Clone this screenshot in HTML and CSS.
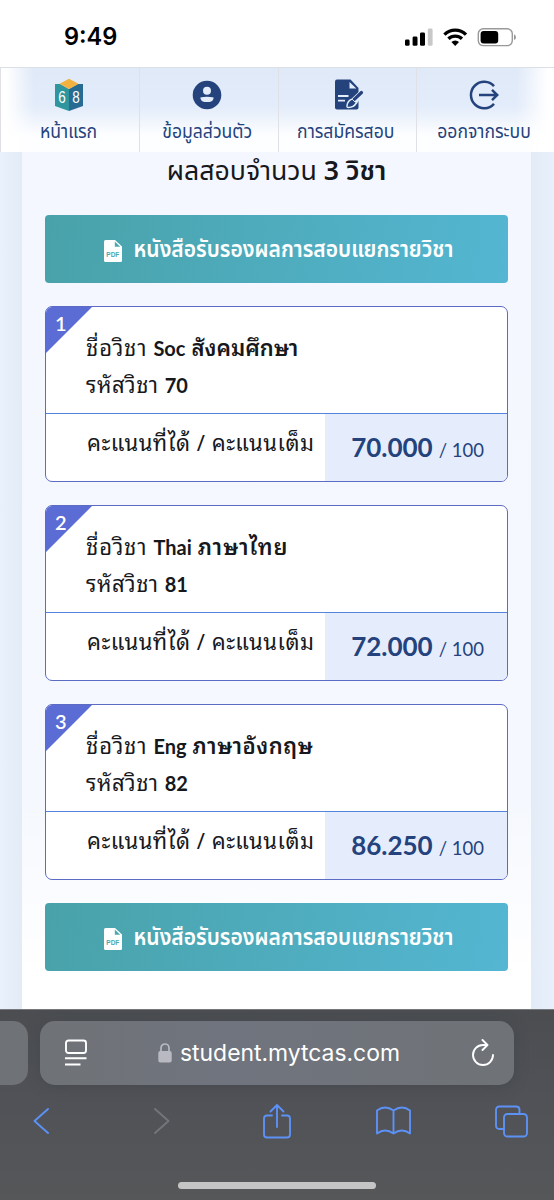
FILE: index.html
```html
<!DOCTYPE html>
<html lang="th">
<head>
<meta charset="utf-8">
<title>myTCAS</title>
<link rel="stylesheet" href="styles.css">
</head>
<body>
<header class="status">
  <span class="clock">9:49</span>
  <svg class="status-icons" width="114" height="20" viewBox="0 0 114 20">
    <rect x="1" y="11.5" width="4.6" height="6.3" rx="1.4"/>
    <rect x="8.6" y="8.5" width="4.9" height="9.3" rx="1.4"/>
    <rect x="16" y="4.5" width="5" height="13.3" rx="1.4"/>
    <rect x="23.8" y="0.5" width="4.8" height="17.3" rx="1.4" fill="#c8c8c8"/>
    <g fill="none" stroke="#000" stroke-width="3.3">
      <path d="M40.4 6.6a15.5 15.5 0 0 1 21.6 0"/>
      <path d="M44.4 10.8a9.8 9.8 0 0 1 13.6 0"/>
    </g>
    <path d="M47.4 14a5.5 5.5 0 0 1 7.600 0l-3.800 3.900z"/>
    <rect x="74.3" y="0.8" width="34" height="16.800" rx="5" fill="#fff" stroke="#999" stroke-width="1.400"/>
    <rect x="76.600" y="3" width="17.600" height="12.400" rx="3"/>
    <path d="M110 6.300q2 1 2 2.900t-2 2.900z" fill="#999"/>
  </svg>
</header>

<nav class="nav">
  <a class="nav-item">
    <svg width="28" height="34" viewBox="0 0 28 34">
      <path d="M0 6h5l9 5v22L0 28z" fill="#2e969c"/>
      <path d="M28 6h-5l-9 5v22l14-5z" fill="#286b92"/>
      <path d="M4.500 5.800 14 .8l9.500 5L14 11z" fill="#f2b23f"/>
      <text class="logo-digit" x="3.200" y="24.800" textLength="7.500" lengthAdjust="spacingAndGlyphs">6</text><text class="logo-digit" x="17.300" y="24.800" textLength="7.500" lengthAdjust="spacingAndGlyphs">8</text>
    </svg>
    <span class="nav-label">หน้าแรก</span>
  </a>
  <a class="nav-item">
    <svg width="30" height="34" viewBox="0 0 30 34">
      <circle cx="15" cy="17" r="14.300" fill="#24427c"/>
      <circle cx="15" cy="12.800" r="4" fill="#e3ecfa"/>
      <path d="M8.300 19.500Q15 18.200 21.700 19.500 21.200 23.500 17.500 24.100h-5Q8.800 23.500 8.300 19.500z" fill="#e3ecfa"/>
    </svg>
    <span class="nav-label">ข้อมูลส่วนตัว</span>
  </a>
  <a class="nav-item">
    <svg class="doc" width="30" height="34" viewBox="0 0 30 34">
      <path d="M3 1.500h13.500L24.500 10v19.500q0 2-2 2H3q-2 0-2-2v-26q0-2 2-2z" fill="#24427c"/>
      <path d="M15.500 4v6.500h6.800z" fill="#e3ecfa"/>
      <path d="M4 18h10.500M4 22.700h7" stroke="#e3ecfa" stroke-width="1.800"/>
      <path d="M27.500 14.500 19 22.500q-4 1-4.500 5.500 4.500 0 6.500-3.500z" fill="#24427c" stroke="#e3ecfa" stroke-width="4.500" stroke-linejoin="round"/>
      <path d="M27.500 14.500 20 21.700" stroke="#24427c" stroke-width="3.200" stroke-linecap="round"/>
      <path d="M18.500 22.500q-3.600 1.500-4 5.500 4.300-.3 6-3.500z" fill="#24427c" stroke="#24427c" stroke-width="1.600"/>
      <path d="m18.200 21.200 3 3" stroke="#e3ecfa" stroke-width="1"/>
    </svg>
    <span class="nav-label">การสมัครสอบ</span>
  </a>
  <a class="nav-item">
    <svg class="logout" width="30" height="34" viewBox="0 0 30 34" fill="none" stroke="#24427c" stroke-width="2.500">
      <path d="M25 8.200a13.200 13.200 0 1 0 0 17.600"/>
      <path d="M10 17h18M23 11.800l5.200 5.200-5.200 5.200"/>
    </svg>
    <span class="nav-label">ออกจากระบบ</span>
  </a>
</nav>

<main class="page">
  <section class="panel">
    <h1 class="title">ผลสอบจำนวน <b>3 วิชา</b></h1>
    <a class="pdf-button">
      <svg width="18" height="22" viewBox="0 0 18 22"><path d="M1.500 0H11l7 6.500V20.500Q18 22 16.500 22h-15Q0 22 0 20.500v-19Q0 0 1.500 0z" fill="#fff"/><path d="M10.800 1.500v5.300h5.400z" fill="#4ba8b0"/><text class="pdf-text" x="2.300" y="16.500" textLength="13" lengthAdjust="spacingAndGlyphs">PDF</text></svg>
      <span class="pdf-label">หนังสือรับรองผลการสอบแยกรายวิชา</span>
    </a>

    <article class="card">
      <span class="corner"></span><span class="num">1</span>
      <div class="card-head"><p><span class="th name">ชื่อวิชา</span><b>Soc</b><b class="th soc">สังคมศึกษา</b></p><p><span class="th code">รหัสวิชา</span><b>70</b></p></div>
      <div class="card-foot"><span class="foot-label th">คะแนนที่ได้ / คะแนนเต็ม</span><span class="score"><b>70.000</b><small>/ 100</small></span></div>
    </article>
    <article class="card">
      <span class="corner"></span><span class="num">2</span>
      <div class="card-head"><p><span class="th name">ชื่อวิชา</span><b>Thai</b><b class="th thai">ภาษาไทย</b></p><p><span class="th code">รหัสวิชา</span><b>81</b></p></div>
      <div class="card-foot"><span class="foot-label th">คะแนนที่ได้ / คะแนนเต็ม</span><span class="score"><b>72.000</b><small>/ 100</small></span></div>
    </article>
    <article class="card">
      <span class="corner"></span><span class="num">3</span>
      <div class="card-head"><p><span class="th name">ชื่อวิชา</span><b>Eng</b><b class="th eng">ภาษาอังกฤษ</b></p><p><span class="th code">รหัสวิชา</span><b>82</b></p></div>
      <div class="card-foot"><span class="foot-label th">คะแนนที่ได้ / คะแนนเต็ม</span><span class="score"><b>86.250</b><small>/ 100</small></span></div>
    </article>

    <a class="pdf-button">
      <svg width="18" height="22" viewBox="0 0 18 22"><path d="M1.500 0H11l7 6.500V20.500Q18 22 16.500 22h-15Q0 22 0 20.500v-19Q0 0 1.500 0z" fill="#fff"/><path d="M10.800 1.500v5.300h5.400z" fill="#4ba8b0"/><text class="pdf-text" x="2.300" y="16.500" textLength="13" lengthAdjust="spacingAndGlyphs">PDF</text></svg>
      <span class="pdf-label">หนังสือรับรองผลการสอบแยกรายวิชา</span>
    </a>
  </section>
</main>

<footer class="browser">
  <div class="tabs">
    <div class="tab-prev"></div>
    <div class="address">
      <svg width="22" height="28" viewBox="0 0 22 28" fill="none" stroke="#fff" stroke-width="1.900"><rect x="1" y="1.500" width="20" height="12.500" rx="2.500"/><path d="M0 19.300h21.500M0 25.500h15.500"/></svg>
      <div class="host">
        <svg width="14" height="20" viewBox="0 0 14 20"><rect x="0.300" y="8" width="13.400" height="11.500" rx="2" fill="#b9bac1"/><path d="M3 9V5a4 4 0 0 1 8 0v4" fill="none" stroke="#b9bac1" stroke-width="1.700"/></svg>
        <span class="url">student.mytcas.com</span>
      </div>
      <svg width="24" height="28" viewBox="0 0 24 28" fill="none" stroke="#fff" stroke-width="1.900" stroke-linecap="round" stroke-linejoin="round"><path d="M22 16A10 10 0 1 1 12 6h4M11.500 1l5 5-5 5"/></svg>
    </div>
  </div>
  <div class="tools">
    <svg width="16" height="28" viewBox="0 0 16 28" class="stroke"><path d="M15 2 1.500 14 15 26"/></svg>
    <svg width="16" height="28" viewBox="0 0 16 28" class="stroke off"><path d="M1 2l13.500 12L1 26"/></svg>
    <svg width="28" height="36" viewBox="0 0 28 36" class="stroke share"><path d="M9 12.500H4Q1 12.500 1 15.500V31.500Q1 34.500 4 34.500H24Q27 34.500 27 31.500V15.500Q27 12.500 24 12.500H19M14 24V2M7.500 8.500 14 2l6.500 6.500"/></svg>
    <svg width="35" height="30" viewBox="0 0 35 30" class="stroke"><path d="M17.500 4.500Q9-1.500 1 4.500V27.500Q9 21.500 17.500 27.500 26 21.500 34 27.500V4.500Q26-1.500 17.500 4.500zV27.500"/></svg>
    <svg width="33" height="33" viewBox="0 0 33 33" class="stroke"><rect x="9" y="9" width="23" height="22.500" rx="3.500"/><path d="M9 24H4.500Q1 24 1 20.500V5Q1 1.500 4.500 1.500H21Q24.500 1.500 24.500 5V9"/></svg>
  </div>
  <div class="home-bar"></div>
</footer>
</body>
</html>
```
FILE: styles.css
```css
* { box-sizing: border-box; }
body { margin: 0; width: 554px; height: 1200px; overflow: hidden; display: flex; flex-direction: column; font-family: "Noto Sans", "Noto Sans Thai", sans-serif; color: #17181c; background: #fff; }
svg { flex: none; display: block; }
.status { height: 67px; flex: none; display: flex; justify-content: space-between; align-items: flex-start; padding: 22px 36px 0 64px; }
.clock { font: 600 23.600px/30px Inter, sans-serif; color: #000; }
.status-icons { margin-top: 6px; }
.nav { height: 85px; flex: none; display: grid; grid-template-columns: 139px 138.500px 138.500px 138px; border-top: 1px solid #dcdfe6; background: linear-gradient(90deg, #fff 6px, #fff0 34px, #fff0 516px, #fff 548px), linear-gradient(#dfe9f8 0, #e3ecfa 38px, #fdfeff 68px); }
.nav-item { border-left: 1px solid #dfe1e6; display: flex; flex-direction: column; align-items: center; padding: 10px 3px 0 0; color: #24427c; }
.nav-label { font-size: 17.600px; line-height: 28px; margin-top: 4px; white-space: nowrap; transform: scaleY(1.120); }
.doc { margin-left: 6px; }
.logout { margin-right: 1px; }
.logo-digit { font: 17px "Liberation Sans", sans-serif; fill: #fff; }
.page { height: 857px; flex: none; padding: 0 23px 0 22px; background: linear-gradient(90deg, #e9f1fd 0, #e3ebf7 22px, #e3ebf7 532px, #e8f0fc 554px); }
.panel { height: 100%; padding: 0 23px; background: linear-gradient(#f4f7ff 0, #f5f8fe 650px, #fff 820px); display: flex; flex-direction: column; }
.title { margin: 0; height: 63px; text-align: center; font-size: 26.700px; line-height: 36px; font-weight: 400; white-space: nowrap; }
.title b { font-weight: 600; }
.pdf-button { height: 68px; flex: none; border-radius: 4px; display: flex; justify-content: center; align-items: center; gap: 12px; padding-left: 4px; color: #fff; background: linear-gradient(100deg, #49a2a9, #54b6d2); }
.pdf-button svg { margin-top: 3px; }
.pdf-label { font-size: 21px; font-weight: 600; white-space: nowrap; line-height: 30px; transform: scaleY(1.120); margin-top: -2px; }
.pdf-text { font: bold 8px "Liberation Sans", sans-serif; fill: #4ba8b0; }
.card { position: relative; height: 176px; flex: none; margin-top: 23px; border: 1.500px solid #5c6bc4; border-radius: 7px; background: #fff; overflow: hidden; display: flex; flex-direction: column; font-family: Lato, "Noto Sans Thai Looped", "Noto Sans Thai", "Noto Sans", sans-serif; }
.card + .pdf-button { margin-top: 23px; }
.corner { position: absolute; left: 0; top: 0; width: 46px; height: 46px; background: #5b6cd5; clip-path: polygon(0 0, 100% 0, 0 100%); }
.num { position: absolute; left: 9px; top: 3px; color: #fff; font-size: 20px; line-height: 26px; font-weight: 600; }
.card-head { height: 107px; padding: 21px 0 0 40px; border-bottom: 1.500px solid #5584dc; }
.card-head p { margin: 0; height: 37px; display: flex; align-items: baseline; gap: 6px; font-size: 20px; line-height: 37px; white-space: nowrap; }
.card-head b { font-weight: 700; }
.card .th { font-family: "Noto Sans Thai Looped", "Noto Sans Thai", "Noto Sans", sans-serif; font-size: 22px; }
.card b.th { font-weight: 600; }
.card .name, .card .thai { letter-spacing: 0.900px; }
.card .code, .card .eng { letter-spacing: 0.500px; }
.card-foot { flex: 1; display: grid; grid-template-columns: 279px 1fr; }
.card-foot .foot-label { padding: 9px 0 0 41px; line-height: 36px; white-space: nowrap; letter-spacing: 0.500px; }
.score { background: #e5edfc; color: #24427c; display: flex; justify-content: flex-end; align-items: baseline; padding: 15px 23px 0 0; line-height: 36px; gap: 6px; white-space: nowrap; }
.score b { font-size: 26px; font-weight: 700; }
.score small { font-size: 18.500px; }
.browser { height: 191px; flex: none; background: linear-gradient(#4b4d51, #505257 90px, #565759); border-top: 1px solid #77797c; }
.tabs { display: flex; gap: 12px; padding-top: 11px; }
.tab-prev { width: 28px; height: 64px; background: #6f7276; border-radius: 0 15px 15px 0; }
.address { width: 474px; height: 64px; border-radius: 15px; background: linear-gradient(90deg, #6f7276, #70747e 40%, #6f7276); box-shadow: 0 2px 14px #3b3f4860; display: flex; align-items: center; justify-content: space-between; padding: 0 19px 0 25px; }
.host { display: flex; align-items: center; gap: 8px; }
.url { color: #fff; font: 22.900px/30px Inter, sans-serif; }
.tools { display: grid; grid-template-columns: repeat(5, 117.500px); align-items: center; justify-items: center; height: 36px; margin: 18px 0 0 -17.500px; }
.stroke { fill: none; stroke: #5c91f5; stroke-width: 1.900; stroke-linecap: round; stroke-linejoin: round; }
.off { stroke: #73757a; margin-left: 6px; }
.share { margin-left: 2px; }
.home-bar { width: 198px; height: 7px; border-radius: 4px; background: #c5c5c5; margin: 43px auto 0; }
```
